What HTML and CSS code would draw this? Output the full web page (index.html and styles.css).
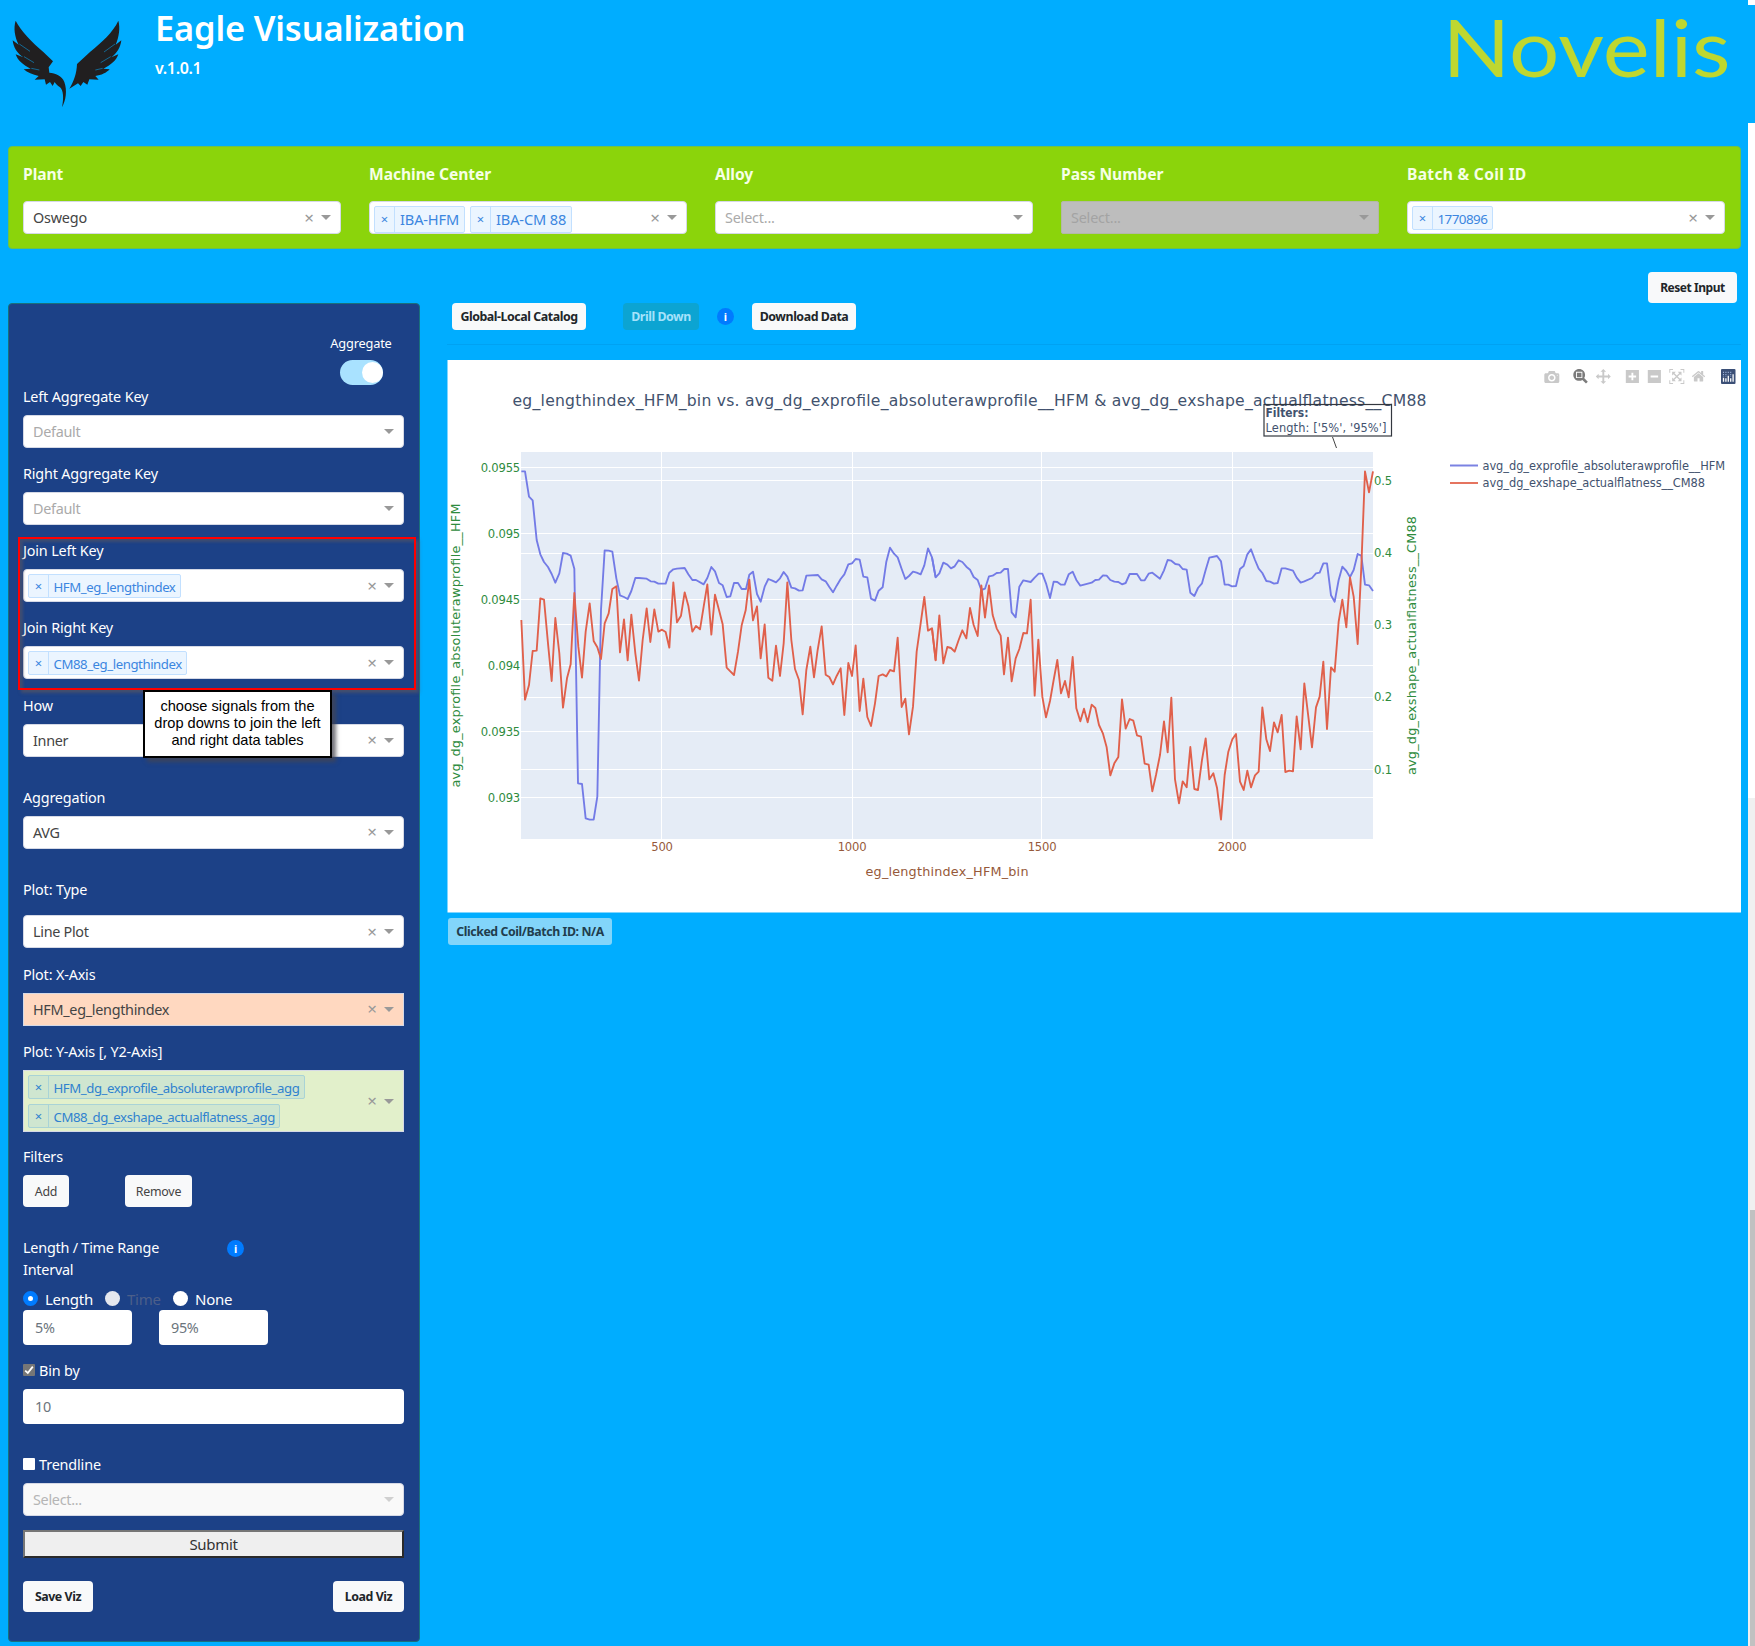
FILE: index.html
```html
<!DOCTYPE html>
<html lang="en">
<head>
<meta charset="utf-8">
<title>Eagle Visualization</title>
<link rel="stylesheet" href="styles.css">
</head>
<body>
<div class="page">
  <header class="header">
    <svg class="eagle" width="124" height="112" viewBox="0 0 372 336">
      <g fill="#211f20">
        <path d="M47 62 C62 92 96 126 130 156 L159 184 L146 202 L148 218 C166 220 186 226 193 246 C202 272 198 300 186 322 C192 294 190 270 180 262 C172 256 168 252 164 246 L158 258 L150 246 L138 254 L134 238 L104 239 L116 228 C98 224 82 218 71 208 L92 206 C70 196 52 180 47 163 L70 172 C52 160 40 142 38 121 L56 134 C44 110 40 84 47 62Z"/>
        <path d="M355 62 C340 96 304 128 270 156 L231 192 C230 220 222 244 208 266 L234 250 L242 258 L250 246 L262 254 L268 238 L296 239 L286 228 C304 226 320 218 329 208 L310 206 C332 196 350 180 355 163 L334 172 C350 160 362 142 364 121 L347 134 C357 110 361 84 355 62Z"/>
      </g>
      <path d="M58 132L90 154M72 170L102 188M94 205L118 210M345 132L312 156M332 170L302 188M308 205L286 210" stroke="#0e8ccb" stroke-width="2" fill="none"/>
    </svg>
    <div class="brand">
      <h1 class="brand-title">Eagle Visualization</h1>
      <div class="brand-version">v.1.0.1</div>
    </div>
    <svg class="novelis" width="296" height="120" viewBox="1439 0 296 120"><text x="1441.500" y="76.500" textLength="288" lengthAdjust="spacingAndGlyphs">Novelis</text></svg>
  </header>

  <section class="filters">
    <div class="filter"><div class="filter-label">Plant</div>
      <div class="select"><span class="value">Oswego</span><span class="clear">×</span><span class="caret"></span></div></div>
    <div class="filter"><div class="filter-label">Machine Center</div>
      <div class="select"><div class="tags"><span class="tag tall"><i>×</i><b>IBA-HFM</b></span><span class="tag tall"><i>×</i><b>IBA-CM 88</b></span></div><span class="clear">×</span><span class="caret"></span></div></div>
    <div class="filter"><div class="filter-label">Alloy</div>
      <div class="select"><span class="value placeholder">Select...</span><span class="caret"></span></div></div>
    <div class="filter"><div class="filter-label">Pass Number</div>
      <div class="select locked"><span class="value placeholder">Select...</span><span class="caret"></span></div></div>
    <div class="filter"><div class="filter-label wide-label">Batch &amp; Coil ID</div>
      <div class="select"><div class="tags"><span class="tag"><i>×</i><b class="digits">1770896</b></span></div><span class="clear">×</span><span class="caret"></span></div></div>
  </section>

  <div class="reset-row"><button class="btn strong reset">Reset Input</button></div>

  <div class="columns">
    <aside class="sidebar">
      <div class="aggregate"><span class="aggregate-label">Aggregate</span><span class="toggle"><span class="knob"></span></span></div>

      <div class="field"><label>Left Aggregate Key</label><div class="select"><span class="value placeholder">Default</span><span class="caret"></span></div></div>
      <div class="field"><label>Right Aggregate Key</label><div class="select"><span class="value placeholder">Default</span><span class="caret"></span></div></div>
      <div class="field"><label>Join Left Key</label><div class="select"><div class="tags"><span class="tag"><i>×</i><b>HFM_eg_lengthindex</b></span></div><span class="clear">×</span><span class="caret"></span></div></div>
      <div class="field"><label>Join Right Key</label><div class="select"><div class="tags"><span class="tag"><i>×</i><b>CM88_eg_lengthindex</b></span></div><span class="clear">×</span><span class="caret"></span></div></div>
      <div class="field spaced"><label>How</label><div class="select"><span class="value">Inner</span><span class="clear">×</span><span class="caret"></span></div></div>
      <div class="field spaced"><label>Aggregation</label><div class="select"><span class="value">AVG</span><span class="clear">×</span><span class="caret"></span></div></div>
      <div class="field plot-type"><label>Plot: Type</label><div class="select"><span class="value">Line Plot</span><span class="clear">×</span><span class="caret"></span></div></div>
      <div class="field"><label>Plot: X-Axis</label><div class="select x-axis"><span class="value">HFM_eg_lengthindex</span><span class="clear">×</span><span class="caret"></span></div></div>
      <div class="field y-field"><label>Plot: Y-Axis [, Y2-Axis]</label><div class="select y-axis"><div class="tags"><span class="tag"><i>×</i><b>HFM_dg_exprofile_absoluterawprofile_agg</b></span><span class="tag"><i>×</i><b>CM88_dg_exshape_actualflatness_agg</b></span></div><span class="clear">×</span><span class="caret"></span></div></div>

      <div class="field spaced"><label>Filters</label>
        <div class="filter-buttons"><button class="btn add">Add</button><button class="btn remove">Remove</button></div></div>

      <div class="range-head"><label>Length / Time Range<br>Interval</label><span class="info">i</span></div>
      <div class="radios">
        <span class="radio checked"></span><span class="r-length">Length</span>
        <span class="radio dim"></span><span class="r-time">Time</span>
        <span class="radio"></span><span>None</span>
      </div>
      <div class="range-inputs"><div class="input">5%</div><div class="input">95%</div></div>

      <div class="check"><span class="box on"><svg width="12" height="12" viewBox="0 0 12 12"><path d="M2.2 6.6L4.8 9L9.8 2.6" fill="none" stroke="#fff" stroke-width="1.8"/></svg></span>Bin by</div>
      <div class="input wide">10</div>
      <div class="check trend"><span class="box"></span>Trendline</div>
      <div class="select off"><span class="value placeholder">Select...</span><span class="caret"></span></div>
      <button class="submit">Submit</button>
      <div class="viz-buttons"><button class="btn strong save">Save Viz</button><button class="btn strong load">Load Viz</button></div>

      <div class="highlight"></div>
      <div class="callout">choose signals from the<br>drop downs to join the left<br>and right data tables</div>
    </aside>

    <main class="main">
      <div class="toolbar">
        <button class="btn strong small catalog">Global-Local Catalog</button>
        <button class="btn strong small drill">Drill Down</button>
        <span class="info">i</span>
        <button class="btn strong small download">Download Data</button>
      </div>
      <svg class="chart" width="1294" height="553" viewBox="447 360 1294 553">
        <rect x="447.5" y="360" width="1294" height="552.5" fill="#fff"/>
        <rect x="521" y="452" width="852" height="387" fill="#e5ecf6"/>
        <path stroke="#fff" stroke-width="1" fill="none" d="M521 467.5h852M521 480.5h852M521 533.5h852M521 553.5h852M521 599.5h852M521 624.5h852M521 665.5h852M521 697.5h852M521 731.5h852M521 769.5h852M521 797.5h852M661.5 452v387M852.5 452v387M1041.5 452v387M1232.5 452v387"/>
        <g fill="none" stroke-width="5.6" stroke-linejoin="round">
          <g stroke="#737be6">
            <path transform="translate(500 440) scale(.33333)" d="M64 94L75 94L87 170L98 181L110 300L121 343L132 366L144 381L155 402L166 428L178 400L189 339L200 341L212 347L223 386L234 1030L246 1032L257 1135L269 1139L281 1139L292 1070L303 510L314 331L326 332L337 335L349 415L360 466L372 471L383 477L394 453L406 414L417 414L440 416L452 424L463 425L475 431L497 431L508 398L520 388L531 386L554 384L565 403L577 420L588 420L611 433L622 414L634 381L645 394L657 429L668 436L680 471L691 469L702 429L714 429L725 447L738 447L748 404L759 395L771 462L782 485L794 440L805 417L817 422L828 427L840 415L851 396L862 410L874 443L885 445L897 452L908 451L919 407L954 405L965 418L977 424L988 441L999 457L1010 437L1022 417L1033 403L1045 373L1056 370L1067 357L1079 359L1090 410L1102 412L1113 476L1125 482L1136 452L1148 442L1159 365L1170 323L1182 341L1193 352L1205 387L1216 417L1227 408L1239 395L1250 398L1262 403L1273 376L1284 325L1296 352L1307 412"/>
            <path transform="translate(930 440) scale(.33333)" d="M6 352L17 412L28 400L40 368L52 374L63 385L74 379L86 361L97 366L109 380L120 389L131 411L143 420L154 450L165 446L177 409L188 407L200 399L212 398L223 387L234 387L245 517L257 532L268 440L280 421L302 426L314 413L326 401L337 401L348 430L360 474L371 425L382 426L393 434L404 434L416 403L428 395L439 420L451 437L485 428L496 420L507 419L519 406L530 407L541 420L553 425L565 426L576 433L587 429L599 402L621 402L633 421L644 421L656 401L667 398L690 416L702 391L713 360L724 362L736 372L747 374L758 387L770 389L781 458L793 468L804 444L816 430L827 390L838 353L861 348L873 364L884 434L895 434L906 439L918 438L930 387L941 378L952 343L963 328L975 360L986 386L997 399L1009 423L1020 425L1032 431L1043 429L1055 385L1066 385L1089 392L1100 413L1112 428L1123 424L1146 414L1158 400L1169 398L1180 370L1191 370L1203 466L1214 485L1226 420L1237 380L1249 393L1260 411L1271 390L1283 342L1294 347L1305 434L1317 436L1329 453"/>
          </g>
          <g stroke="#e0604b">
            <path transform="translate(500 440) scale(.33333)" d="M64 540L75 779L87 735L98 633L110 632L121 475L132 479L144 610L155 723L166 534L178 640L189 803L201 715L212 673L223 459L235 620L246 713L257 575L269 490L281 603L292 622L303 657L314 550L326 520L337 447L349 439L360 637L372 538L383 661L394 524L406 640L417 722L428 600L440 505L451 606L463 508L475 575L486 569L497 576L508 623L520 427L531 547L543 527L554 457L565 497L577 575L588 558L600 568L611 500L622 433L634 584L645 464L657 510L668 553L680 683L691 694L702 705L714 635L725 556L737 511L748 419L759 541L771 499L782 655L794 553L805 713L817 722L828 617L840 708L851 610L862 427L874 600L885 687L897 720L908 823L919 690L931 620L942 712L953 630L965 559L977 704L988 711L999 733L1010 708L1022 685L1033 825L1045 669L1056 708L1067 616L1079 813L1090 716L1102 831L1113 858L1125 790L1136 708L1148 703L1159 709L1170 690L1182 694L1193 593L1205 801L1216 776L1227 883L1239 800L1250 635L1262 550L1273 471L1284 572L1296 565L1307 661"/>
            <path transform="translate(930 440) scale(.33333)" d="M6 565L17 661L28 526L40 670L52 621L63 624L74 635L86 600L97 571L109 595L120 504L131 555L143 588L154 436L165 533L177 436L188 525L200 565L212 587L222 703L234 593L245 724L257 655L268 627L280 579L291 580L302 479L314 767L325 599L337 770L348 832L360 783L371 720L382 660L393 760L405 723L416 772L428 651L439 805L451 844L462 806L473 847L485 794L496 804L507 855L519 881L530 922L541 1006L553 970L565 951L576 778L587 866L599 837L610 842L621 886L633 890L644 971L656 974L667 1054L678 1005L690 945L702 844L713 937L724 773L735 1018L747 1090L758 1024L770 1042L781 921L793 1047L804 1050L816 960L827 895L838 1018L850 1000L861 1043L873 1139L884 1005L895 935L907 898L918 882L930 1025L941 1050L952 992L963 1042L975 1006L986 995L997 802L1009 898L1020 933L1032 847L1043 877L1055 825L1066 996L1078 992L1089 994L1100 829L1112 928L1123 730L1135 830L1146 922L1158 802L1169 770L1180 665L1191 867L1203 682L1214 695L1226 545L1237 479L1249 562L1260 412L1271 470L1283 612L1294 380L1305 94L1317 157L1329 94"/>
          </g>
        </g>
        <text class="title" x="512.5" y="406" textLength="914">eg_lengthindex_HFM_bin vs. avg_dg_exprofile_absoluterawprofile__HFM &amp; avg_dg_exshape_actualflatness__CM88</text>
        <g class="tick green" text-anchor="end">
          <text x="520" y="471.6">0.0955</text><text x="520" y="537.6">0.095</text><text x="520" y="603.6">0.0945</text><text x="520" y="669.6">0.094</text><text x="520" y="735.6">0.0935</text><text x="520" y="801.6">0.093</text>
        </g>
        <g class="tick green">
          <text x="1374" y="484.6">0.5</text><text x="1374" y="557.4">0.4</text><text x="1374" y="629">0.3</text><text x="1374" y="701">0.2</text><text x="1374" y="773.5">0.1</text>
        </g>
        <g class="tick brown" text-anchor="middle">
          <text x="662" y="851.3">500</text><text x="852" y="851.3">1000</text><text x="1042" y="851.3">1500</text><text x="1232" y="851.3">2000</text>
        </g>
        <text class="axis brown" x="865.5" y="876.4" textLength="163">eg_lengthindex_HFM_bin</text>
        <text class="axis green" transform="translate(460 787.5) rotate(-90)" textLength="284">avg_dg_exprofile_absoluterawprofile__HFM</text>
        <text class="axis green" transform="translate(1415.5 775) rotate(-90)" textLength="259">avg_dg_exshape_actualflatness__CM88</text>
        <path d="M1332.5 437L1336.5 448" stroke="#444" fill="none"/>
        <rect x="1264" y="404.5" width="127.5" height="31.5" fill="none" stroke="#33373f" stroke-width="1.2"/>
        <text class="note bold" x="1265.5" y="417.3" textLength="43" lengthAdjust="spacingAndGlyphs">Filters:</text>
        <text class="note" x="1265.5" y="431.8" textLength="121">Length: ['5%', '95%']</text>
        <path d="M1450 465.5h28" stroke="#7b82e2" stroke-width="2"/>
        <path d="M1450 483h28" stroke="#e5745f" stroke-width="2"/>
        <text class="note" x="1482.5" y="469.5" textLength="242.5">avg_dg_exprofile_absoluterawprofile__HFM</text>
        <text class="note" x="1482.5" y="487.3" textLength="222.5">avg_dg_exshape_actualflatness__CM88</text>
        <g fill="#c9c9c9" transform="translate(1.3 0)">
          <path transform="translate(1543 369.5) scale(.015) matrix(1 0 0 -1 0 850)" d="m500 450c-83 0-150-67-150-150 0-83 67-150 150-150 83 0 150 67 150 150 0 83-67 150-150 150z m400 150h-120c-16 0-34 13-39 29l-31 93c-6 15-23 28-40 28h-340c-16 0-34-13-39-28l-31-94c-6-15-23-28-40-28h-120c-55 0-100-45-100-100v-450c0-55 45-100 100-100h800c55 0 100 45 100 100v450c0 55-45 100-100 100z m-400-550c-138 0-250 112-250 250 0 138 112 250 250 250 138 0 250-112 250-250 0-138-112-250-250-250z m365 380c-19 0-35 16-35 35 0 19 16 35 35 35 19 0 35-16 35-35 0-19-16-35-35-35z"/>
          <path fill="#7c7c7c" transform="translate(1572 369) scale(.0145) matrix(1 0 0 -1 0 850)" d="m1000-25l-250 251c40 63 63 138 63 218 0 224-182 406-407 406-224 0-406-182-406-406s183-406 407-406c80 0 155 22 218 62l250-250 125 125z m-812 250l0 438 437 0 0-438-437 0z m62 375l313 0 0-312-313 0 0 312z"/>
          <path transform="translate(1594.5 369) scale(.015) matrix(1 0 0 -1 0 850)" d="m1000 350l-187 188 0-125-250 0 0 250 125 0-188 187-187-187 125 0 0-250-250 0 0 125-188-188 186-187 0 125 252 0 0-250-125 0 187-188 188 188-125 0 0 250 250 0 0-126 187 188z"/>
          <path transform="translate(1624.5 369) scale(.015) matrix(1 0 0 -1 0 850)" d="m1 787l0-875 875 0 0 875-875 0z m687-500l-187 0 0-187-125 0 0 187-188 0 0 125 188 0 0 187 125 0 0-187 187 0 0-125z"/>
          <path transform="translate(1646.5 369) scale(.015) matrix(1 0 0 -1 0 850)" d="m0 788l0-876 875 0 0 876-875 0z m688-500l-500 0 0 125 500 0 0-125z"/>
          <path transform="translate(1668 369) scale(.015) matrix(1 0 0 -1 0 850)" d="m250 850l-187 0-63 0 0-62 0-188 63 0 0 188 187 0 0 62z m688 0l-188 0 0-62 188 0 0-188 62 0 0 188 0 62-62 0z m-875-938l0 188-63 0 0-188 0-62 63 0 187 0 0 62-187 0z m875 188l0-188-188 0 0-62 188 0 62 0 0 62 0 188-62 0z m-125 188l-1 0-93-94-156 156 156 156 92-93 2 0 0 250-250 0 0-2 93-92-156-156-156 156 94 92 0 2-250 0 0-250 0 0 93 93 157-156-157-156-93 94 0 0 0-250 250 0 0 0-94 93 156 157 156-157-93-93 0 0 250 0 0 250z"/>
          <path transform="translate(1690.500 369) scale(.0145) matrix(1 0 0 -1 0 850)" d="m786 296v-267q0-15-11-26t-25-10h-214v214h-143v-214h-214q-15 0-25 10t-11 26v267q0 1 0 2t0 2l321 264 321-264q1-1 1-4z m124 39l-34-41q-5-5-12-6h-2q-7 0-12 3l-386 322-386-322q-7-4-13-4-7 2-12 7l-35 41q-4 5-3 13t6 12l401 334q18 15 42 15t43-15l136-114v109q0 8 5 13t13 5h107q8 0 13-5t5-13v-227l122-102q5-5 6-12t-4-13z"/>
        </g>
        <g transform="translate(.5 -.2)">
          <rect x="1720.500" y="369.300" width="14.500" height="15" rx="1" fill="#3b4f76"/>
          <path d="M1723 378v4M1725.400 378.500v3.500M1727.800 376v6M1730.200 378.500v3.500M1732.600 374.500v7.500" stroke="#fff" stroke-width="1.300"/>
          <path d="M1723 372v5M1725.400 372v5M1727.800 372v2.500M1730.200 372v5" stroke="#9ab0d8" stroke-width="1.100" stroke-dasharray="1.200 1"/>
        </g>
      </svg>
      <div class="clicked">Clicked Coil/Batch ID: N/A</div>
    </main>
  </div>
</div>
<div class="gutter"><div class="g-top"></div><div class="g-gap"></div><div class="g-white"></div><div class="g-track"></div><div class="g-thumb"></div></div>
</body>
</html>
```
FILE: styles.css
```css
* { box-sizing: border-box; }
html, body { margin: 0; height: 1646px; overflow: hidden; }
body {
  display: flex;
  background: #00adff;
  font-family: "Noto Sans", "Open Sans", sans-serif;
  font-size: 14.4px;
  color: #fff;
}
.page { width: 1748px; padding: 0 7px 0 8px; }

.header { display: flex; height: 146px; align-items: flex-start; }
.eagle { margin-left: -8px; flex: none; margin-right: 31px; }
.brand-title { margin: 4px 0 0; font-size: 34.4px; line-height: 48px; font-weight: 600; letter-spacing: -0.15px; }
.brand-version { font-size: 16px; line-height: 24px; font-weight: 600; margin-top: 4px; letter-spacing: -0.35px; }
.novelis { margin-left: auto; margin-right: 5px; overflow: visible; }
.novelis text { font-family: Lato, sans-serif; font-size: 79px; fill: #bfd730; }

.filters {
  display: grid; grid-template-columns: repeat(5, 318px); column-gap: 28px;
  height: 103px; padding: 16px 14px 0; background: #8bd40b;
  border: 1px solid #6cc24a; border-radius: 4px;
}
.filter-label { font-weight: 700; font-size: 15.6px; line-height: 22px; margin-bottom: 16px; letter-spacing: -0.05px; color: #f6ffe6; }
.wide-label { letter-spacing: 0.3px; }

.select {
  display: flex; align-items: center; height: 33px; padding-right: 9px;
  background: #fff; border: 1px solid #d5d9e6; border-radius: 4px; color: #444;
}
.value { flex: 1; padding-left: 9px; letter-spacing: -0.3px; }
.filters .value { letter-spacing: -0.2px; }
.placeholder { color: #aaa; }
.clear { margin-left: auto; color: #999; font-size: 17px; line-height: 20px; margin-right: 7px; }
.caret { border: 5px solid transparent; border-top-color: #999; border-bottom-width: 0; }
.tags { display: flex; flex-wrap: wrap; flex: 1; align-self: flex-start; padding: 4px 0 0 4px; gap: 5px; }
.tag { display: flex; height: 24px; border: 1px solid #c2e0ff; background: #ebf5ff; border-radius: 2px; color: #3b86e0; line-height: 24px; }
.tag.tall { height: 27px; line-height: 25px; }
.tag i { font-style: normal; width: 20px; text-align: center; border-right: 1px solid #c2e0ff; font-size: 13px; line-height: 22px; }
.tag.tall i { line-height: 25px; }
.tag b { font-weight: 400; padding: 0 4.5px; letter-spacing: -0.43px; font-size: 13.2px; }
.tag.tall b { font-size: 14.6px; letter-spacing: -0.15px; padding: 0 5px; }
.tag .digits { font-size: 13.4px; letter-spacing: -0.55px; padding-right: 5px; }
.locked { background: #bdbdbd; border-color: #b3b9a6; border-radius: 2px; }
.locked .placeholder { color: #a3a3a3; }
.off { background: #f9f9f9; }
.off .placeholder { color: #b5b5b5; }
.off .caret { border-top-color: #d0d0d0; }

.btn {
  font-family: inherit; background: #f8f9fa; border: 0; border-radius: 4px; color: #444;
  height: 32px; padding: 0; font-size: 12.4px; letter-spacing: -0.25px; flex: none;
}
.strong { font-weight: 700; color: #212529; font-size: 12.4px; letter-spacing: -0.45px; }
.reset-row { display: flex; justify-content: flex-end; height: 54px; padding: 23px 4px 0 0; }
.reset { width: 89px; height: 31px; font-size: 12px; }

.columns { display: flex; gap: 27px; }
.sidebar {
  position: relative; width: 412px; height: 1339px; flex: none; padding: 28px 15px 0 14px;
  background: #1c4187; border: 1px solid #19707c; border-radius: 4px;
}
.aggregate { display: flex; flex-direction: column; width: 86px; margin-left: auto; align-items: center; height: 53.6px; }
.aggregate-label { font-size: 12.8px; line-height: 22px; letter-spacing: -0.2px; }
.toggle { display: flex; justify-content: flex-end; align-items: center; width: 43px; height: 25px; margin-top: 6px; border-radius: 13px; background: #a9e2ff; flex: none; }
.knob { width: 21px; height: 21px; border-radius: 50%; background: #fff; }
.field { margin-bottom: 15.3px; }
.field.spaced { margin-bottom: 30px; }
.field label { display: block; line-height: 22px; margin-bottom: 7px; letter-spacing: -0.17px; }
.field.plot-type label { margin-bottom: 14.7px; }
.field.y-field { margin-bottom: 14.4px; }
.x-axis { background: #ffd8c0; border-radius: 0; }
.y-axis { background: #e2f0cb; border-radius: 0; height: 62px; }
.y-axis .tag { background: #cfe6d0; border-color: #a9d3d6; color: #2f82cf; }
.y-axis .tag i { border-color: #a9d3d6; }
.filter-buttons { display: flex; gap: 56px; }
.add { width: 46px; } .remove { width: 67px; }
.range-head { display: flex; line-height: 22px; letter-spacing: -0.22px; }
.range-head label { width: 204px; }
.info { width: 17px; height: 17px; border-radius: 50%; background: #007bff; font-weight: 700; font-size: 11px; line-height: 17px; text-align: center; }
.range-head .info { margin-top: 3px; }
.radios { display: flex; align-items: center; height: 23px; margin-top: 6px; font-size: 15px; letter-spacing: -0.25px; }
.radio { width: 15px; height: 15px; border-radius: 50%; background: #fff; margin-right: 7px; }
.radio.checked { background: #fff; border: 5px solid #007bff; }
.radio.dim { background: #e4e7ee; }
.r-length { width: 60px; } .r-time { width: 46px; color: #4c5f8a; }
.range-inputs { display: flex; gap: 27px; }
.input { width: 109px; height: 35px; line-height: 35px; padding-left: 12px; background: #fff; border-radius: 4px; color: #6c757d; letter-spacing: -0.3px; }
.input.wide { width: auto; }
.check { display: flex; align-items: center; height: 22px; margin: 14px 0 8px; letter-spacing: -0.15px; }
.check.trend { margin: 29px 0 8px; }
.box { width: 12px; height: 12px; border-radius: 1px; background: #fff; margin-right: 4px; display: flex; }
.box.on { background: #767676; }
.submit { display: block; width: 100%; height: 28px; margin-top: 14px; padding: 0; font-family: inherit; font-size: 15px; letter-spacing: -0.3px; color: #333; background: #efefef; border: 2px solid; border-color: #767676 #2b2b2b #2b2b2b #767676; }
.viz-buttons { display: flex; justify-content: space-between; margin-top: 23px; }
.save { width: 70px; height: 31px; } .load { width: 71px; height: 31px; }
.highlight { position: absolute; left: 9px; top: 233px; width: 398px; height: 153px; border: 2px solid #f00; box-shadow: 3px 3px 3px rgba(85,85,100,.7), inset 3px 3px 3px rgba(85,85,100,.6); }
.callout {
  position: absolute; left: 134px; top: 386px; width: 189px; height: 68px; padding-top: 6px;
  background: #fff; border: 2px solid #000; box-shadow: 4px 4px 4px rgba(70,70,80,.75);
  font: 14.6px/17px "Liberation Sans", sans-serif; color: #000; text-align: center; white-space: nowrap;
}

.main { width: 1294px; }
.toolbar { display: flex; height: 57px; padding-left: 5px; align-items: flex-start; background: linear-gradient(#00a2f2, #00a2f2) 0 41px / 100% 1px no-repeat; }
.toolbar .btn { height: 27px; }
.catalog { width: 134px; }
.toolbar .drill { width: 76px; margin-left: 37px; background: #0ca4d2; color: #a5e2fb; }
.toolbar .info { margin: 5px 18px 0; }
.download { width: 104px; }
.chart { display: block; }
.chart text { font-family: "DejaVu Sans", sans-serif; fill: #42526e; white-space: pre; }
.chart .title { font-size: 15.6px; }
.chart .tick text { font-size: 11.6px; letter-spacing: -0.2px; }
.chart .axis { font-size: 12.8px; }
.chart .note { font-size: 11.4px; }
.chart .bold { font-weight: 700; }
.chart .green text, .chart text.green { fill: #2e8b3d; }
.chart .brown text, .chart text.brown { fill: #96593a; }
.clicked { width: 164px; height: 27px; margin: 5px 0 0 1px; line-height: 27px; text-align: center; background: #82d5fa; border-radius: 3px; color: #213d4d; font-weight: 700; font-size: 12.3px; letter-spacing: -0.4px; white-space: nowrap; }

.gutter { width: 7px; height: 1646px; display: flex; flex-direction: column; }
.g-top { height: 5px; background: #fff; }
.g-gap { height: 118px; }
.g-white { height: 675px; background: #fff; }
.g-track { height: 412px; background: #f0f0f0; }
.g-thumb { flex: 1; background: #c1c1c1; border-left: 2px solid #f0f0f0; }
```
